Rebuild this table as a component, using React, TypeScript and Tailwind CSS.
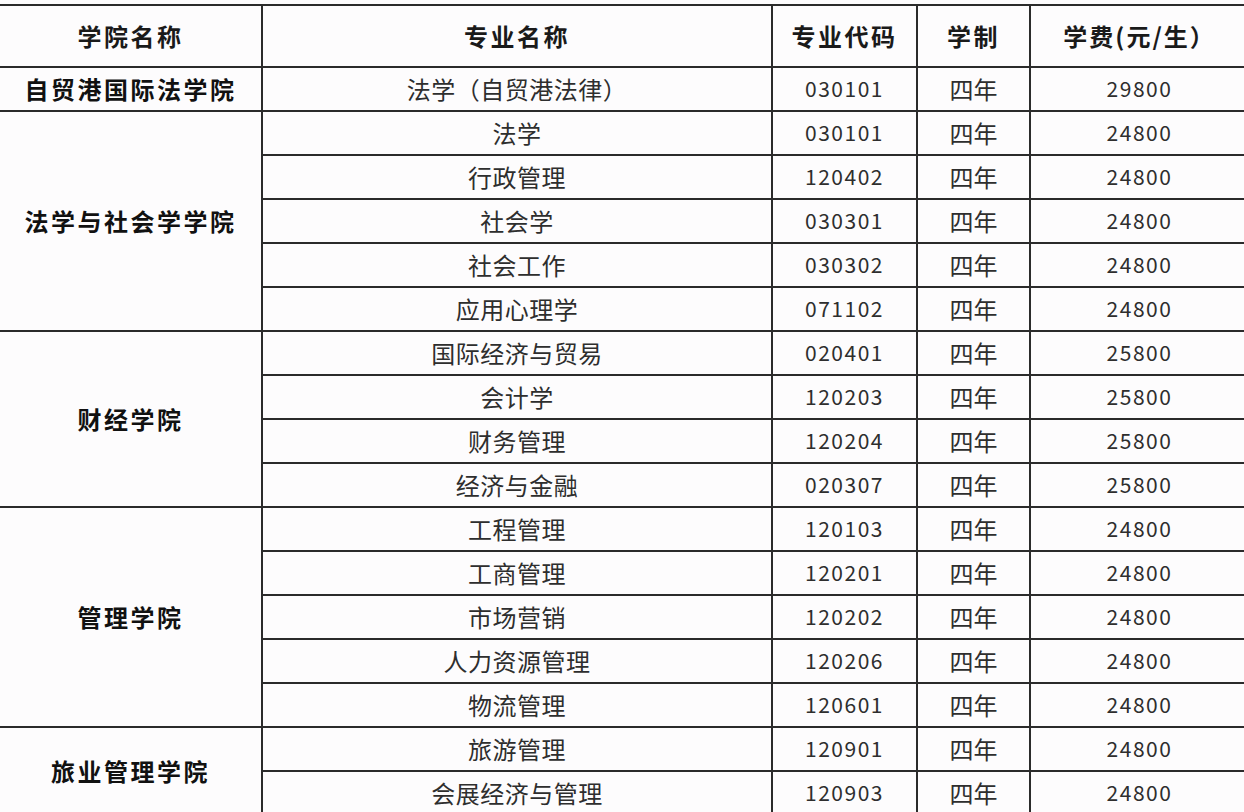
import React from "react";

type Group = { college: string; majors: [string, string, string, string][] };

const groups: Group[] = [
  { college: "自贸港国际法学院", majors: [["法学（自贸港法律）", "030101", "四年", "29800"]] },
  {
    college: "法学与社会学学院",
    majors: [
      ["法学", "030101", "四年", "24800"],
      ["行政管理", "120402", "四年", "24800"],
      ["社会学", "030301", "四年", "24800"],
      ["社会工作", "030302", "四年", "24800"],
      ["应用心理学", "071102", "四年", "24800"],
    ],
  },
  {
    college: "财经学院",
    majors: [
      ["国际经济与贸易", "020401", "四年", "25800"],
      ["会计学", "120203", "四年", "25800"],
      ["财务管理", "120204", "四年", "25800"],
      ["经济与金融", "020307", "四年", "25800"],
    ],
  },
  {
    college: "管理学院",
    majors: [
      ["工程管理", "120103", "四年", "24800"],
      ["工商管理", "120201", "四年", "24800"],
      ["市场营销", "120202", "四年", "24800"],
      ["人力资源管理", "120206", "四年", "24800"],
      ["物流管理", "120601", "四年", "24800"],
    ],
  },
  {
    college: "旅业管理学院",
    majors: [
      ["旅游管理", "120901", "四年", "24800"],
      ["会展经济与管理", "120903", "四年", "24800"],
    ],
  },
];

const cjk = { fontFamily: '"Noto Sans CJK SC", "Noto Sans", sans-serif' };
const cell = "border-2 border-[#2b2b2b] text-center align-middle p-0 whitespace-nowrap";

export default function App() {
  return (
    <div className="w-[1244px] h-[812px] overflow-hidden bg-[#fdfcfd]" style={cjk}>
      <table className="table-fixed border-collapse ml-[-2px] mt-[4px] w-[1250px]">
        <colgroup>
          <col className="w-[263px]" />
          <col className="w-[510px]" />
          <col className="w-[145px]" />
          <col className="w-[113px]" />
          <col className="w-[219px]" />
        </colgroup>
        <thead>
          <tr className="h-[62px] text-[24px] font-bold text-[#1a1a1a] tracking-[2.5px]">
            <th className={cell}>学院名称</th>
            <th className={cell}>专业名称</th>
            <th className={cell}>专业代码</th>
            <th className={cell}>学制</th>
            <th className={cell + " tracking-[2px]"}>学费(元/生）</th>
          </tr>
        </thead>
        <tbody>
          {groups.map((g) =>
            g.majors.map((m, i) => (
              <tr key={g.college + i} className="h-[44px] text-[#2e2e2e]">
                {i === 0 && (
                  <td
                    rowSpan={g.majors.length}
                    className={cell + " text-[24px] font-bold text-[#111] tracking-[2.5px]"}
                  >
                    {g.college}
                  </td>
                )}
                <td className={cell + " text-[24px] tracking-[0.5px]"}>{m[0]}</td>
                <td className={cell + " text-[21px] tracking-[1.5px]"}>{m[1]}</td>
                <td className={cell + " text-[24px]"}>{m[2]}</td>
                <td className={cell + " text-[21px] tracking-[1.5px]"}>{m[3]}</td>
              </tr>
            ))
          )}
        </tbody>
      </table>
    </div>
  );
}
